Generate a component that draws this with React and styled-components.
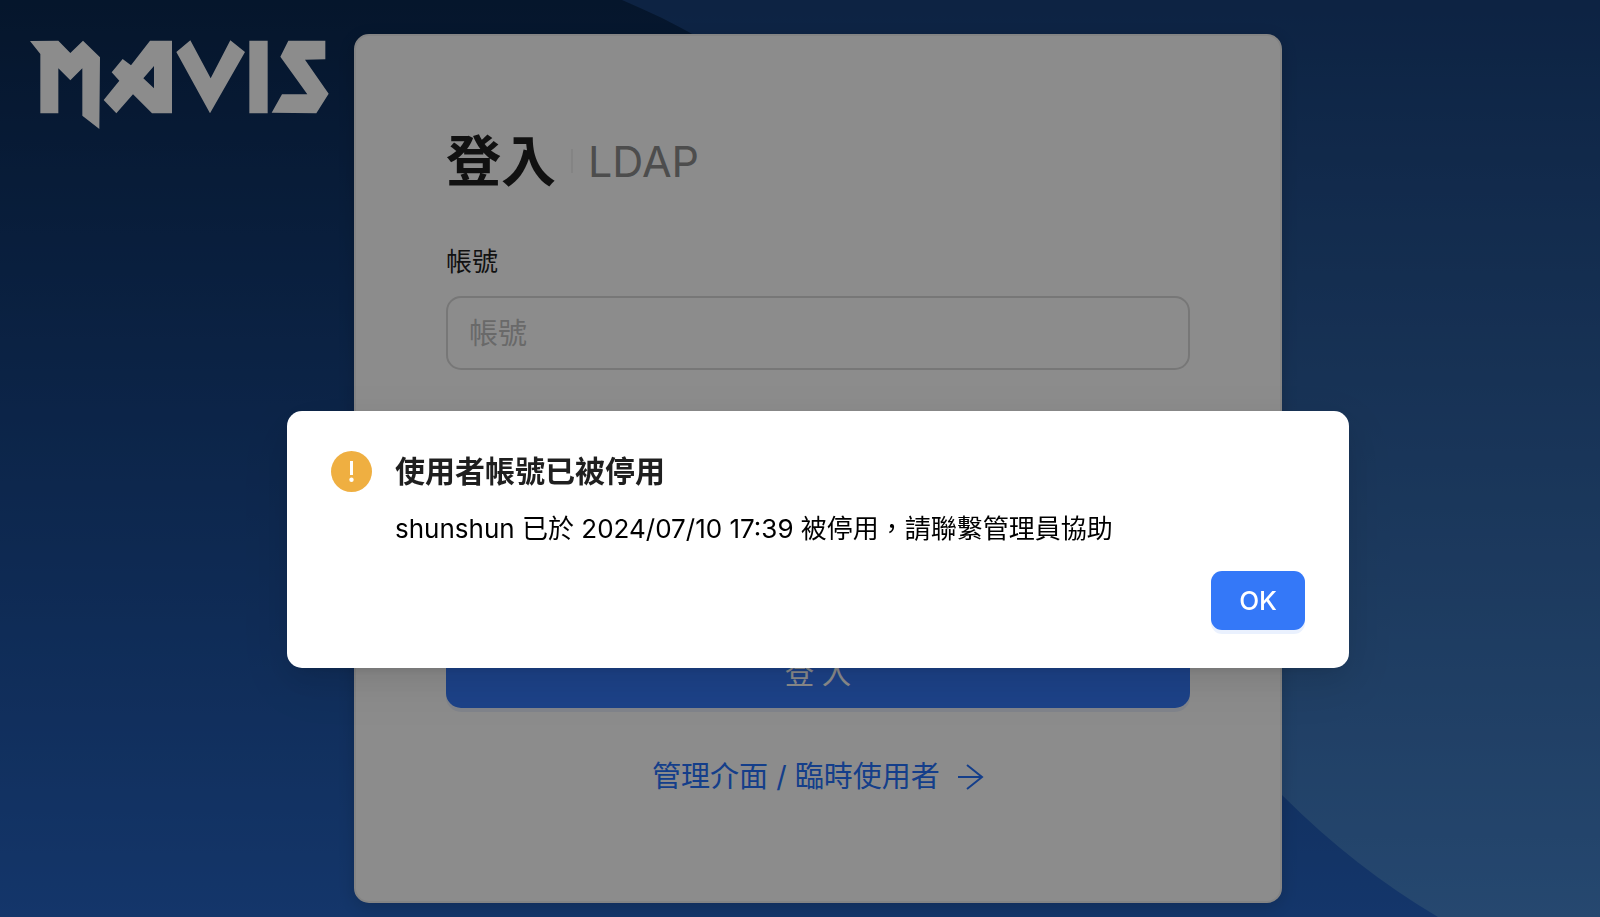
import React, { useState } from "react";
import styled, { createGlobalStyle } from "styled-components";

const GlobalStyle = createGlobalStyle`
  * {
    box-sizing: border-box;
  }

  body {
    margin: 0;
    color: #1f1f1f;
    font-family: Inter, "Noto Sans CJK TC", sans-serif;
    font-size: 26px;
    line-height: 40px;
  }
`;

const Page = styled.div`
  position: relative;
  min-height: 100vh;
  padding: 34px 0 14px 36px;
  background: linear-gradient(#0a2850, #2563c2);
`;

const Wave = styled.svg`
  position: absolute;
  top: 0;
  left: 0;
  width: 100%;
  height: 100%;
`;

const Logo = styled.svg`
  position: absolute;
  top: 40px;
  left: 29px;
  width: 300px;
  height: 90px;
  fill: #ffffff;
`;

const LoginCard = styled.main`
  position: relative;
  max-width: 928px;
  margin: 0 auto;
  padding: 90px 90px 101px;
  border: 2px solid #f0f0f0;
  border-radius: 15px;
  background: #ffffff;
  box-shadow: 0 4px 16px rgba(0, 0, 0, 0.16);
`;

const Heading = styled.header`
  display: flex;
  align-items: center;
  margin-bottom: 46px;
`;

const Title = styled.h1`
  margin: 0;
  font-size: 55px;
  font-weight: 700;
  line-height: 70px;
`;

const Divider = styled.span`
  width: 2px;
  height: 24px;
  margin: 0 15px;
  background: #f0f0f0;
`;

const Method = styled.span`
  color: #8c8c8c;
  font-size: 43px;
  line-height: 70px;
`;

const Form = styled.form`
  display: flex;
  flex-direction: column;
`;

const Label = styled.label`
  margin-bottom: 14px;
`;

const TextInput = styled.input`
  width: 100%;
  height: 74px;
  padding: 0 21px;
  border: 2px solid #d9d9d9;
  border-radius: 15px;
  outline: none;
  background: #ffffff;
  color: inherit;
  font-family: inherit;
  font-size: 29px;

  &::placeholder {
    color: #bfbfbf;
  }
`;

const PrimaryButton = styled.button`
  height: ${(props) => (props.$large ? "74px" : "59px")};
  padding: 0 28px;
  border: 0;
  border-radius: ${(props) => (props.$large ? "15px" : "11px")};
  background: #3478f8;
  box-shadow: 0 4px 0 rgba(52, 120, 248, 0.1);
  color: #ffffff;
  font-family: inherit;
  font-size: ${(props) => (props.$large ? "29px" : "26px")};
  font-weight: ${(props) => (props.$large ? "400" : "500")};
  cursor: pointer;
`;

const SubmitButton = styled(PrimaryButton)`
  margin-top: 264px;
`;

const AdminLink = styled.a`
  display: flex;
  align-items: center;
  justify-content: center;
  gap: 18px;
  margin-top: 46px;
  color: #2672fc;
  font-size: 29px;
  line-height: 46px;
  text-decoration: none;
`;

const ArrowIcon = styled.svg`
  width: 26px;
  height: 26px;
  fill: none;
  stroke: currentColor;
  stroke-width: 2;
`;

const Mask = styled.div`
  position: fixed;
  inset: 0;
  padding: 411px 0 0 36px;
  background: rgba(0, 0, 0, 0.45);
`;

const Dialog = styled.section`
  display: flex;
  flex-direction: column;
  max-width: 1062px;
  margin: 0 auto;
  padding: 37px 44px 38px;
  border-radius: 15px;
  background: #ffffff;
  box-shadow: 0 11px 29px rgba(0, 0, 0, 0.08), 0 6px 11px -7px rgba(0, 0, 0, 0.12),
    0 16px 51px 15px rgba(0, 0, 0, 0.05);
`;

const Message = styled.div`
  display: grid;
  grid-template-columns: 41px 1fr;
  column-gap: 23px;
  row-gap: 15px;
  align-items: center;
  margin-bottom: 22px;
`;

const WarningIcon = styled.svg`
  width: 41px;
  height: 41px;
`;

const MessageTitle = styled.h2`
  margin: 0;
  font-size: 30px;
  font-weight: 700;
  line-height: 46px;
`;

const MessageText = styled.p`
  grid-column: 2;
  margin: 0;
  color: #000000;
`;

const DialogFooter = styled.footer`
  display: flex;
  justify-content: flex-end;
`;

const MavisLogo = () => (
    <Logo viewBox="87 120 900 270" role="img" aria-label="MAVIS">
        <path d="M90 123L175 122L211 159L249 122L300 172L298 387L247 347V205L211 241L175 205V340H121V162Z"/>
        <path fillRule="evenodd"
              d="M368 177L393 196L450 122H516V340H456L399 283L349 340L311 300L358 242L335 217ZM430 235L462 265V198Z"/>
        <path d="M571 121L632 235L691 121L735 156L630 340L529 156Z"/>
        <path d="M748 122H803V340H748Z"/>
        <path d="M865 122H976V178L915 179L986 281L949 340L815 338L846 283H922L841 170Z"/>
    </Logo>
);

const BackgroundWave = () => (
    <Wave viewBox="0 0 1600 917" preserveAspectRatio="none" aria-hidden="true">
        <defs>
            <linearGradient id="wave" x1="0" y1="0" x2="0" y2="1">
                <stop offset="0" stopColor="#18407a"/>
                <stop offset="1" stopColor="#4583cb"/>
            </linearGradient>
        </defs>
        <path fill="url(#wave)" d="M622 0C980 150 960 450 1283 796Q1355 868 1438 917H1600V0Z"/>
    </Wave>
);

const LoginForm = () => {
    const [account, setAccount] = useState("");

    return (
        <LoginCard>
            <Heading>
                <Title>登入</Title>
                <Divider/>
                <Method>LDAP</Method>
            </Heading>
            <Form onSubmit={(e) => e.preventDefault()}>
                <Label htmlFor="account">帳號</Label>
                <TextInput id="account" type="text" placeholder="帳號" value={account}
                           onChange={(e) => setAccount(e.target.value)}/>
                <SubmitButton type="submit" $large>登 入</SubmitButton>
            </Form>
            <AdminLink href="#admin">
                管理介面 / 臨時使用者
                <ArrowIcon viewBox="0 0 26 26" aria-hidden="true">
                    <path d="M0 13H24M9 1L24 13L9 25"/>
                </ArrowIcon>
            </AdminLink>
        </LoginCard>
    );
};

const DisabledDialog = ({ user, time, onClose }) => (
    <Mask>
        <Dialog role="alertdialog" aria-modal="true" aria-labelledby="dialog-title">
            <Message>
                <WarningIcon viewBox="0 0 41 41" aria-hidden="true">
                    <circle cx="20.5" cy="20.5" r="20.5" fill="#efaf41"/>
                    <path d="M19 10H22V24H19Z" fill="#ffffff"/>
                    <circle cx="20.5" cy="28.7" r="2.2" fill="#ffffff"/>
                </WarningIcon>
                <MessageTitle id="dialog-title">使用者帳號已被停用</MessageTitle>
                <MessageText>{user} 已於 {time} 被停用，請聯繫管理員協助</MessageText>
            </Message>
            <DialogFooter>
                <PrimaryButton type="button" onClick={onClose}>OK</PrimaryButton>
            </DialogFooter>
        </Dialog>
    </Mask>
);

const App = () => {
    const [open, setOpen] = useState(true);

    return (
        <Page>
            <GlobalStyle/>
            <BackgroundWave/>
            <MavisLogo/>
            <LoginForm/>
            {open && <DisabledDialog user="shunshun" time="2024/07/10 17:39" onClose={() => setOpen(false)}/>}
        </Page>
    );
};

export default App;
